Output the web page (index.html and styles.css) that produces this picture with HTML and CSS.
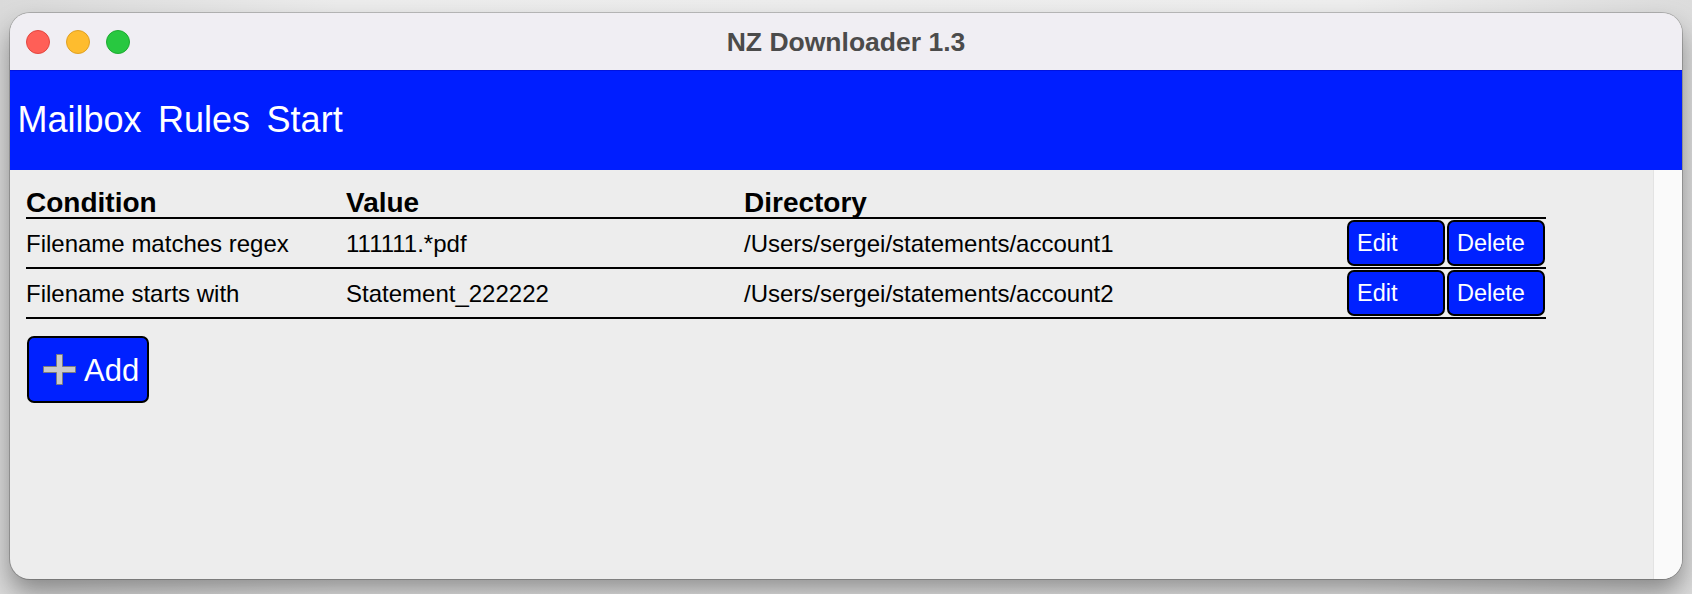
FILE: index.html
```html
<!DOCTYPE html>
<html lang="en">
<head>
<meta charset="utf-8">
<title>NZ Downloader 1.3</title>
<link rel="stylesheet" href="styles.css">
</head>
<body>
<div class="window">
  <header class="titlebar">
    <div class="lights">
      <span class="light light-red"></span>
      <span class="light light-yellow"></span>
      <span class="light light-green"></span>
    </div>
    <div class="title">NZ Downloader 1.3</div>
    <div class="titlebar-spacer"></div>
  </header>
  <nav class="menubar">
    <span class="menu-item">Mailbox</span>
    <span class="menu-item">Rules</span>
    <span class="menu-item">Start</span>
  </nav>
  <div class="content">
    <main class="main">
      <div class="rules">
        <div class="row row-head">
          <div class="cell">Condition</div>
          <div class="cell">Value</div>
          <div class="cell">Directory</div>
          <div class="cell"></div>
          <div class="cell"></div>
        </div>
        <div class="row">
          <div class="cell">Filename matches regex</div>
          <div class="cell">111111.*pdf</div>
          <div class="cell">/Users/sergei/statements/account1</div>
          <div class="cell cell-btn"><button class="btn">Edit</button></div>
          <div class="cell cell-btn"><button class="btn">Delete</button></div>
        </div>
        <div class="row">
          <div class="cell">Filename starts with</div>
          <div class="cell">Statement_222222</div>
          <div class="cell">/Users/sergei/statements/account2</div>
          <div class="cell cell-btn"><button class="btn">Edit</button></div>
          <div class="cell cell-btn"><button class="btn">Delete</button></div>
        </div>
      </div>
      <button class="add-btn">
        <svg class="plus" width="33" height="31" viewBox="0 0 33 31" aria-hidden="true">
          <path d="M13.5 0.5 H19.5 V12.5 H32.5 V18.5 H19.5 V30.5 H13.5 V18.5 H0.5 V12.5 H13.5 Z" fill="#c9c9c9" stroke="#7d7d7d" stroke-width="1"/>
        </svg>
        <span>Add</span>
      </button>
    </main>
    <div class="scrollbar"></div>
  </div>
</div>
</body>
</html>
```

FILE: styles.css
```css
html, body {
  margin: 0;
  padding: 0;
}

body {
  width: 1692px;
  height: 594px;
  overflow: hidden;
  background: linear-gradient(90deg, #dadada 0%, #ececec 20%, #eeeeee 80%, #dcdcdc 100%);
  font-family: "Liberation Sans", Arial, Helvetica, sans-serif;
  padding-top: 13px;
  padding-left: 10px;
  box-sizing: border-box;
}

.window {
  width: 1672px;
  height: 566px;
  border-radius: 20px;
  overflow: hidden;
  display: flex;
  flex-direction: column;
  background: #ededed;
  box-shadow: 0 0 0 1px rgba(0, 0, 0, 0.2), 0 14px 26px rgba(0, 0, 0, 0.38);
}

.titlebar {
  height: 57px;
  flex: none;
  background: #f0eef3;
  display: grid;
  grid-template-columns: 1fr auto 1fr;
  align-items: center;
}

.lights {
  display: flex;
  gap: 16px;
  padding-left: 16px;
  padding-top: 1px;
}

.light {
  width: 24px;
  height: 24px;
  border-radius: 50%;
  box-sizing: border-box;
}

.light-red {
  background: #ff5f57;
  border: 1px solid #e2463f;
}

.light-yellow {
  background: #febc2e;
  border: 1px solid #dfa023;
}

.light-green {
  background: #28c840;
  border: 1px solid #1eaa31;
}

.title {
  font-size: 26.5px;
  font-weight: bold;
  color: #4b4b4b;
  padding-top: 1px;
}

.menubar {
  height: 99px;
  flex: none;
  background: #001eff;
  border-top: 1px solid #0012e0;
  display: flex;
  align-items: center;
  gap: 16.5px;
  padding-left: 7.5px;
  color: #ffffff;
  font-size: 36px;
}

.menu-item {
  padding-bottom: 1px;
}

.content {
  flex: 1;
  display: flex;
  min-height: 0;
}

.main {
  flex: 1;
  padding: 15px 0 0 16px;
  display: flex;
  flex-direction: column;
  align-items: flex-start;
}

.scrollbar {
  width: 28px;
  flex: none;
  background: #fafafa;
  border-left: 1px solid #e3e3e3;
}

.rules {
  width: 1520px;
}

.row {
  display: grid;
  grid-template-columns: 320px 398px 602px 100px 100px;
  align-items: center;
  height: 48px;
  border-bottom: 2px solid #000000;
  font-size: 24px;
  color: #000000;
  box-sizing: content-box;
}

.row .cell {
  padding-top: 2px;
}

.row-head {
  height: 32px;
  align-items: end;
  font-size: 28px;
  font-weight: bold;
}

.row-head .cell {
  line-height: 28px;
  padding-top: 0;
}

.row .cell-btn {
  padding: 0;
  display: flex;
  justify-content: center;
}

.btn {
  width: 98px;
  height: 46px;
  margin: 0;
  box-sizing: border-box;
  background: #0021ff;
  color: #ffffff;
  border: 2px solid #000000;
  border-radius: 7px;
  font-family: "Liberation Sans", Arial, Helvetica, sans-serif;
  font-size: 23.5px;
  text-align: left;
  padding: 0 0 0 8px;
  cursor: pointer;
}

.add-btn {
  margin-top: 17px;
  margin-left: 1px;
  width: 122px;
  height: 67px;
  box-sizing: border-box;
  display: inline-flex;
  align-items: center;
  gap: 8px;
  padding: 0 0 0 14px;
  background: #0021ff;
  color: #ffffff;
  border: 2px solid #000000;
  border-radius: 7px;
  font-family: "Liberation Sans", Arial, Helvetica, sans-serif;
  font-size: 31px;
  cursor: pointer;
}

.add-btn span {
  padding-top: 2px;
}

.plus {
  display: block;
  flex: none;
}
```
